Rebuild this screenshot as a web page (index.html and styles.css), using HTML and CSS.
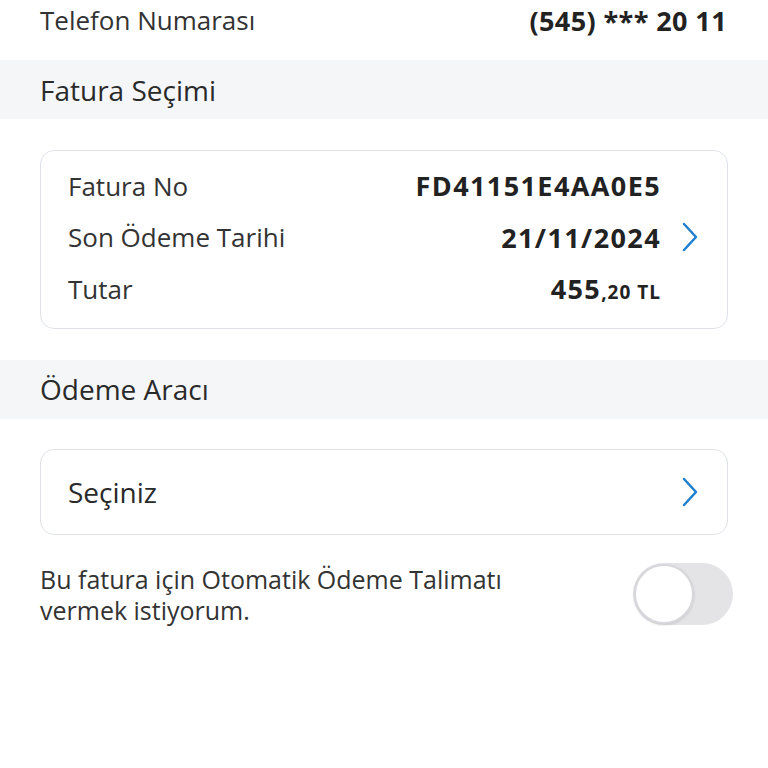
FILE: index.html
```html
<!DOCTYPE html>
<html lang="tr">
<head>
    <meta charset="UTF-8">
    <meta name="viewport" content="width=device-width, initial-scale=1.0">
    <title>Fatura Ödeme</title>
    <link rel="stylesheet" href="styles.css">
</head>
<body>
    <main>
        <div class="info-row">
            <span class="label">Telefon Numarası</span>
            <span class="value">(545) *** 20 11</span>
        </div>

        <h2 class="section-title">Fatura Seçimi</h2>
        <div class="card bill-card">
            <div class="bill-row">
                <span class="label">Fatura No</span>
                <span class="value">FD41151E4AA0E5</span>
                <span class="chevron-slot"></span>
            </div>
            <div class="bill-row">
                <span class="label">Son Ödeme Tarihi</span>
                <span class="value">21/11/2024</span>
                <span class="chevron-slot">
                    <svg class="chevron" viewBox="0 0 18 32"><path d="M3 3 L15 16 L3 29"/></svg>
                </span>
            </div>
            <div class="bill-row">
                <span class="label">Tutar</span>
                <span class="value">455<span class="small">,20 TL</span></span>
                <span class="chevron-slot"></span>
            </div>
        </div>

        <h2 class="section-title">Ödeme Aracı</h2>
        <div class="card select-card">
            <span class="select-text">Seçiniz</span>
            <svg class="chevron" viewBox="0 0 18 32"><path d="M3 3 L15 16 L3 29"/></svg>
        </div>

        <div class="toggle-row">
            <p class="toggle-text">Bu fatura için Otomatik Ödeme Talimatı<br>vermek istiyorum.</p>
            <div class="switch"><span class="knob"></span></div>
        </div>
    </main>
</body>
</html>
```

FILE: styles.css
```css
body {
    margin: 0;
    background-color: #fff;
    color: #2a2a2a;
    font-family: 'Open Sans', 'Noto Sans', sans-serif;
}
main { width: 768px; }

.info-row {
    display: flex;
    justify-content: space-between;
    align-items: center;
    height: 40px;
    padding: 0 41px 0 40px;
    font-size: 26px;
}
.info-row .label { color: #333; }
.info-row .value { font-size: 27px; font-weight: 700; color: #222; letter-spacing: 0.4px; }

.section-title {
    margin: 20px 0 0;
    height: 59px;
    padding-left: 40px;
    display: flex;
    align-items: center;
    background-color: #f5f6f8;
    font-size: 28px;
    font-weight: 400;
    color: #2a2a2a;
}

.card {
    margin: 0 40px;
    border: 1.5px solid #dfe3e8;
    border-radius: 14px;
    background: #fff;
}

.bill-card { margin-top: 31px; padding: 9px 0 13px; margin-bottom: 31px; }
.bill-row {
    display: flex;
    align-items: center;
    height: 51.5px;
    padding-left: 27px;
    font-size: 26px;
}
.bill-row .label { flex: 1; color: #333; }
.bill-row .value { font-size: 27px; font-weight: 700; color: #222; letter-spacing: 1.4px; }
.bill-row .small { font-size: 19px; letter-spacing: 1px; }
.chevron-slot {
    width: 18px;
    margin: 0 28px 0 20px;
    display: flex;
    align-items: center;
}

.chevron {
    width: 18px;
    height: 32px;
    fill: none;
    stroke: #1f7fcf;
    stroke-width: 2.5;
    stroke-linecap: round;
    stroke-linejoin: round;
}

.select-card {
    margin-top: 30px;
    display: flex;
    align-items: center;
    justify-content: space-between;
    height: 84px;
    padding: 0 28px 0 27px;
    font-size: 28px;
    color: #2a2a2a;
}

.toggle-row {
    display: flex;
    justify-content: space-between;
    align-items: flex-start;
    margin-top: 29px;
    padding: 0 35px 0 40px;
}
.toggle-text {
    margin: 0;
    font-size: 25px;
    line-height: 31px;
    color: #333;
}
.switch {
    width: 100px;
    height: 62px;
    margin-top: -1px;
    border-radius: 31px;
    background-color: #e4e4e7;
    display: flex;
    align-items: center;
    padding-left: 1px;
    box-sizing: border-box;
}
.knob {
    width: 56px;
    height: 56px;
    border-radius: 50%;
    background: #fff;
    border: 2px solid #d8d8dc;
    box-shadow: 0 1px 3px rgba(0,0,0,0.12);
}
```
